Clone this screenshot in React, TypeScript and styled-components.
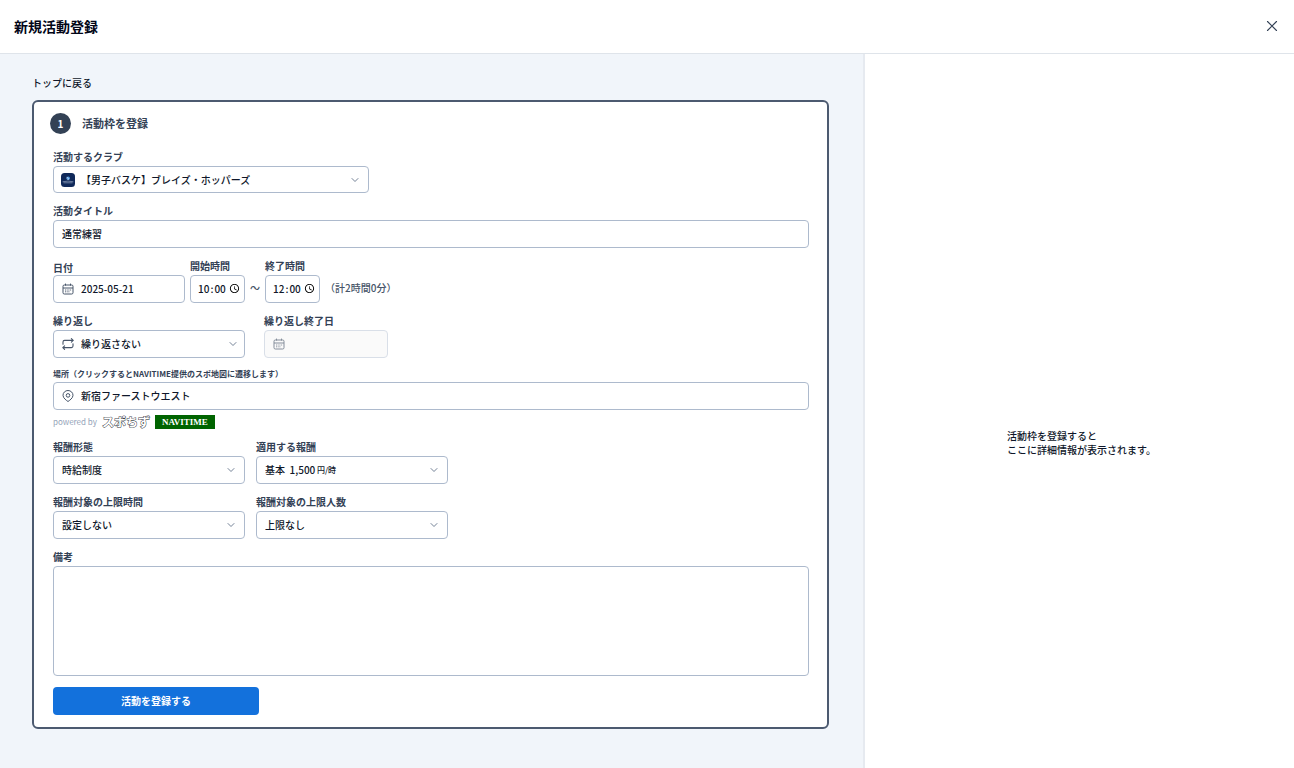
import React from "react";
import styled, { createGlobalStyle, css } from "styled-components";

const ink = "#0f172a";
const slate = "#334155";
const line = "#adbacd";

const GlobalStyle = createGlobalStyle`
  *, *::before, *::after { box-sizing: border-box; }
  body {
    margin: 0;
    background: #fff;
    color: ${ink};
    font-family: "Noto Sans CJK JP", "Noto Sans", sans-serif;
    font-size: 10px;
    font-weight: 500;
  }
  button, input, select, textarea { font: inherit; color: inherit; margin: 0; }
`;

const Page = styled.div`
  display: flex;
  flex-direction: column;
  min-height: 100vh;
`;

const TopBar = styled.header`
  display: flex;
  align-items: center;
  justify-content: space-between;
  height: 54px;
  padding: 0 14px 2px;
  border-bottom: 1px solid #dfe4ea;
`;

const PageTitle = styled.h1`
  margin: 0;
  font-size: 14px;
  line-height: 20px;
  font-weight: 700;
  color: #020617;
`;

const CloseButton = styled.button`
  display: grid;
  place-items: center;
  width: 16px;
  height: 16px;
  padding: 0;
  border: 0;
  background: none;
  color: ${slate};
`;

const Columns = styled.div`
  flex: 1;
  display: grid;
  grid-template-columns: minmax(0, 1fr) 431px;
`;

const FormPane = styled.main`
  padding: 20px 34px 39px 32px;
  background: #f1f5fa;
`;

const DetailPane = styled.aside`
  display: flex;
  align-items: center;
  justify-content: center;
  padding: 64px 0 0 4px;
  border-left: 2px solid #e6eaf0;
`;

const DetailText = styled.p`
  margin: 0;
  line-height: 14px;
`;

const BackLink = styled.a`
  display: block;
  width: fit-content;
  margin-bottom: 8px;
  line-height: 18px;
  color: ${ink};
  text-decoration: none;
`;

const Card = styled.form`
  padding: 11px 18px 12px 19px;
  border: 2px solid #4c5a70;
  border-radius: 6px;
  background: #fff;
`;

const StepHeading = styled.div`
  display: flex;
  align-items: center;
  gap: 11px;
  margin: 0 0 14px -3px;
`;

const StepBadge = styled.span`
  display: grid;
  place-items: center;
  width: 21px;
  height: 21px;
  border-radius: 50%;
  background: ${slate};
  color: #fff;
  font-weight: 700;
`;

const StepTitle = styled.h2`
  margin: 0;
  padding-bottom: 2px;
  font-size: 11px;
  line-height: 18px;
  font-weight: 700;
  color: ${slate};
`;

const Fields = styled.div`
  display: flex;
  flex-direction: column;
  gap: 9px;
`;

const Row = styled.div<{ $gap: number }>`
  display: flex;
  align-items: flex-end;
  gap: ${(p) => p.$gap}px;
`;

const Field = styled.div<{ $width?: number }>`
  display: flex;
  flex-direction: column;
  width: ${(p) => (p.$width ? `${p.$width}px` : "100%")};
`;

const Label = styled.label<{ $size?: "small" | "tight" }>`
  font-weight: 700;
  color: ${slate};
  line-height: 18px;
  ${(p) => p.$size === "tight" && css`line-height: 14px;`}
  ${(p) => p.$size === "small" && css`font-size: 8px; line-height: 14px; padding-bottom: 1px;`}
`;

const Control = styled.div`
  position: relative;
`;

const box = css`
  display: block;
  width: 100%;
  height: 28px;
  padding: 0 8px 2px;
  border: 1px solid ${line};
  border-radius: 4px;
  background: #fff;
  color: ${ink};
  outline: none;
`;

const TextInput = styled.input<{ $icon?: boolean }>`
  ${box}
  ${(p) => p.$icon && css`padding-left: 27px;`}
  &:disabled { background: #fafafa; border-color: #d9dfe8; }
`;

const TimeInput = styled.input`
  ${box}
  padding: 0 4px 2px 6px;
  &::-webkit-datetime-edit-ampm-field { display: none; }
  &::-webkit-datetime-edit { padding: 0; }
  &::-webkit-datetime-edit-text { padding: 0; }
  &::-webkit-calendar-picker-indicator { margin: 0; padding: 0; width: 11px; height: 11px; }
`;

const Select = styled.select<{ $icon?: boolean; $short?: boolean }>`
  ${box}
  appearance: none;
  ${(p) => p.$icon && css`padding-left: 27px;`}
  ${(p) => p.$short && css`height: 27px; padding-bottom: 0;`}
`;

const TextArea = styled.textarea`
  ${box}
  height: 110px;
  padding: 8px;
  resize: none;
`;

const Leading = styled.span`
  position: absolute;
  inset: 0 auto 0 8px;
  display: grid;
  place-items: center;
  width: 14px;
  color: #475569;
  pointer-events: none;
`;

const Trailing = styled.span<{ $right: number }>`
  position: absolute;
  inset: 0 ${(p) => p.$right}px 0 auto;
  display: grid;
  place-items: center;
  color: #64748b;
  pointer-events: none;
`;

const Unit = styled.span`
  position: absolute;
  inset: 0 auto 0 61px;
  font-size: 8px;
  line-height: 28px;
  pointer-events: none;
`;

const Beside = styled.span<{ $width?: number }>`
  width: ${(p) => (p.$width ? `${p.$width}px` : "auto")};
  padding-bottom: 2px;
  line-height: 26px;
  text-align: center;
  white-space: nowrap;
  color: #475569;
`;

const Credits = styled.div`
  display: flex;
  align-items: center;
  gap: 5px;
  height: 14px;
  margin-top: 5px;
  color: #94a3b8;
  font-size: 8px;
  line-height: 14px;
  font-weight: 400;
`;

const MapLogo = styled.span`
  font-size: 12px;
  line-height: 14px;
  font-weight: 700;
  color: #fff;
  -webkit-text-stroke: 1px #3f444c;
  paint-order: stroke fill;
`;

const NaviLogo = styled.span`
  width: 60px;
  height: 14px;
  background: #006400;
  color: #fff;
  font-family: "Liberation Serif", serif;
  font-size: 9px;
  line-height: 14px;
  font-weight: 700;
  text-align: center;
`;

const SubmitButton = styled.button`
  width: 206px;
  height: 28px;
  margin-top: 2px;
  padding: 0 0 2px;
  border: 0;
  border-radius: 4px;
  background: #1371dc;
  color: #fff;
  font-weight: 700;
`;

const CalendarIcon = ({ faded }: { faded?: boolean }) => (
  <svg width="12" height="12" viewBox="0 0 12 12" fill="none" stroke="currentColor" opacity={faded ? 0.65 : 1}>
    <rect x="1" y="2" width="10" height="9" rx="1.3" strokeWidth="1" />
    <path d="M1 5H11M3.5 0.6V2.6M8.5 0.6V2.6" strokeWidth="1" />
    <path d="M3 7H9.2M3 8.8H7.4" strokeWidth="0.9" strokeDasharray="1 0.7" />
  </svg>
);

const RepeatIcon = () => (
  <svg width="12" height="12" viewBox="0 0 12 12" fill="none" stroke="currentColor" strokeWidth="1.1" strokeLinecap="round" strokeLinejoin="round">
    <path d="M1 6.2V4Q1 2.4 2.6 2.4H11.2M9.4 0.7L11.2 2.4L9.4 4.1" />
    <path d="M11 5.8V8Q11 9.6 9.4 9.6H0.8M2.6 7.9L0.8 9.6L2.6 11.3" />
  </svg>
);

const PinIcon = () => (
  <svg width="12" height="12" viewBox="0 0 12 12" fill="none" stroke="currentColor" strokeWidth="1" strokeLinejoin="round">
    <path d="M6 11.5C4.6 10.5 1 8.2 1 5.3A5 4.8 0 0 1 11 5.3C11 8.2 7.4 10.5 6 11.5Z" />
    <circle cx="6" cy="5.4" r="1.8" />
  </svg>
);

const ClubIcon = () => (
  <svg width="14" height="14" viewBox="0 0 14 14">
    <rect width="14" height="14" rx="3.5" fill="#10295a" />
    <circle cx="7.2" cy="5.3" r="1.8" fill="#4b94dc" />
    <path d="M5.6 4.3L7.4 5.1L7 7" stroke="#d5e6f7" strokeWidth="0.7" fill="none" />
    <path d="M1.6 8.8Q7 7.4 12.4 8.8M2.5 9.8H11.5" stroke="#8394b2" strokeWidth="0.8" fill="none" />
  </svg>
);

const Chevron = () => (
  <svg width="8" height="8" viewBox="0 0 8 8" fill="none" stroke="currentColor" strokeWidth="0.9" strokeLinecap="round" strokeLinejoin="round">
    <path d="M1 2.5L4 5.5L7 2.5" />
  </svg>
);

type SelectFieldProps = {
  id: string;
  label: string;
  value: string;
  width: number;
  icon?: React.ReactNode;
  unit?: string;
  short?: boolean;
  chevronRight?: number;
};

const SelectField = ({ id, label, value, width, icon, unit, short, chevronRight = 10 }: SelectFieldProps) => (
  <Field $width={width}>
    <Label htmlFor={id}>{label}</Label>
    <Control>
      <Select id={id} $icon={!!icon} $short={short}>
        <option>{value}</option>
      </Select>
      {icon && <Leading>{icon}</Leading>}
      {unit && <Unit>{unit}</Unit>}
      <Trailing $right={chevronRight}>
        <Chevron />
      </Trailing>
    </Control>
  </Field>
);

export default function App() {
  return (
    <Page>
      <GlobalStyle />
      <TopBar>
        <PageTitle>新規活動登録</PageTitle>
        <CloseButton type="button" aria-label="閉じる">
          <svg width="12" height="12" viewBox="0 0 12 12" stroke="currentColor" strokeWidth="1.1" strokeLinecap="round">
            <path d="M1.5 1.5L10.5 10.5M10.5 1.5L1.5 10.5" />
          </svg>
        </CloseButton>
      </TopBar>
      <Columns>
        <FormPane>
          <BackLink href="#">トップに戻る</BackLink>
          <Card onSubmit={(e) => e.preventDefault()}>
            <StepHeading>
              <StepBadge>1</StepBadge>
              <StepTitle>活動枠を登録</StepTitle>
            </StepHeading>
            <Fields>
              <SelectField id="club" label="活動するクラブ" value="【男子バスケ】ブレイズ・ホッパーズ" width={316} icon={<ClubIcon />} short />
              <Field>
                <Label htmlFor="title">活動タイトル</Label>
                <TextInput id="title" defaultValue="通常練習" />
              </Field>
              <Row $gap={5}>
                <Field $width={132}>
                  <Label htmlFor="date" $size="tight">日付</Label>
                  <Control>
                    <TextInput id="date" defaultValue="2025-05-21" $icon />
                    <Leading><CalendarIcon /></Leading>
                  </Control>
                </Field>
                <Field $width={55}>
                  <Label htmlFor="start">開始時間</Label>
                  <TimeInput id="start" type="time" defaultValue="10:00" />
                </Field>
                <Beside $width={10}>～</Beside>
                <Field $width={55}>
                  <Label htmlFor="end">終了時間</Label>
                  <TimeInput id="end" type="time" defaultValue="12:00" />
                </Field>
                <Beside>（計2時間0分）</Beside>
              </Row>
              <Row $gap={19}>
                <SelectField id="repeat" label="繰り返し" value="繰り返さない" width={192} icon={<RepeatIcon />} chevronRight={8} />
                <Field $width={124}>
                  <Label htmlFor="until">繰り返し終了日</Label>
                  <Control>
                    <TextInput id="until" disabled $icon />
                    <Leading><CalendarIcon faded /></Leading>
                  </Control>
                </Field>
              </Row>
              <Field>
                <Label htmlFor="place" $size="small">場所（クリックするとNAVITIME提供のスポ地図に遷移します）</Label>
                <Control>
                  <TextInput id="place" defaultValue="新宿ファーストウエスト" $icon />
                  <Leading><PinIcon /></Leading>
                </Control>
                <Credits>
                  <span>powered by</span>
                  <MapLogo>スポちず</MapLogo>
                  <NaviLogo>NAVITIME</NaviLogo>
                </Credits>
              </Field>
              <Row $gap={11}>
                <SelectField id="pay-type" label="報酬形態" value="時給制度" width={192} />
                <SelectField id="pay" label="適用する報酬" value={"基本\u00a0\u00a01,500"} unit="円/時" width={192} />
              </Row>
              <Row $gap={11}>
                <SelectField id="max-time" label="報酬対象の上限時間" value="設定しない" width={192} />
                <SelectField id="max-people" label="報酬対象の上限人数" value="上限なし" width={192} />
              </Row>
              <Field>
                <Label htmlFor="note">備考</Label>
                <TextArea id="note" />
              </Field>
              <SubmitButton type="submit">活動を登録する</SubmitButton>
            </Fields>
          </Card>
        </FormPane>
        <DetailPane>
          <DetailText>
            活動枠を登録すると
            <br />
            ここに詳細情報が表示されます。
          </DetailText>
        </DetailPane>
      </Columns>
    </Page>
  );
}
